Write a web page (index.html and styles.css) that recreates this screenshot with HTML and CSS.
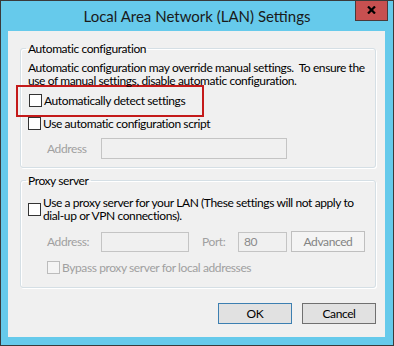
FILE: index.html
```html
<!DOCTYPE html>
<html>
<head>
<meta name="viewport" content="width=device-width, initial-scale=1">
<link rel="stylesheet" href="styles.css">
</head>
<body>
<div class="window">
  <div class="titlebar">
    <span class="title">Local Area Network (LAN) Settings</span>
    <button class="close" aria-label="Close">
      <svg width="9" height="8" viewBox="0 0 9 8"><path d="M1 0.5 L8 7.5 M8 0.5 L1 7.5" stroke="#000" stroke-width="2.2" fill="none"/></svg>
    </button>
  </div>
  <div class="client">
    <fieldset class="group group-auto">
      <legend>Automatic configuration</legend>
      <p class="note">Automatic configuration may override manual settings.&nbsp; To ensure the<br>use of manual settings, disable automatic configuration.</p>
      <div class="highlight">
        <label class="check"><span class="box"></span>Automatically detect settings</label>
      </div>
      <label class="check"><span class="box"></span>Use automatic configuration script</label>
      <div class="field-row row-script">
        <span class="dim label-addr">Address</span>
        <span class="input input-script"></span>
      </div>
    </fieldset>

    <fieldset class="group group-proxy">
      <legend>Proxy server</legend>
      <label class="check check-proxy"><span class="box"></span><span>Use a proxy server for your LAN (These settings will not apply to<br>dial-up or VPN connections).</span></label>
      <div class="field-row row-proxy">
        <span class="dim label-addr">Address:</span>
        <span class="input input-addr"></span>
        <span class="dim label-port">Port:</span>
        <span class="input input-port">80</span>
        <button class="button button-adv" disabled>Advanced</button>
      </div>
      <label class="check check-bypass dim"><span class="box box-off"></span>Bypass proxy server for local addresses</label>
    </fieldset>

    <div class="actions">
      <button class="button button-ok">OK</button>
      <button class="button button-cancel">Cancel</button>
    </div>
  </div>
</div>
</body>
</html>
```

FILE: styles.css
```css
body {
  margin: 0;
  font-family: Lato, "Liberation Sans", sans-serif;
  font-size: 12px;
  letter-spacing: -0.4px;
  color: #000;
  white-space: nowrap;
}
.window {
  width: 394px;
  height: 346px;
  box-sizing: border-box;
  border: 1px solid #3a3a3a;
  background-color: #66caeb;
  display: flex;
  flex-direction: column;
  overflow: hidden;
}
.titlebar {
  position: relative;
  height: 30px;
  flex: none;
  display: flex;
  align-items: center;
  justify-content: center;
}
.title {
  font-size: 15px;
  letter-spacing: 0;
  color: #1a1a1a;
  padding-bottom: 1px;
}
.close {
  position: absolute;
  top: -1px;
  right: 5px;
  width: 33px;
  height: 21px;
  box-sizing: border-box;
  border: 1px solid #4a3a3a;
  border-top: none;
  background-color: #c75050;
  padding: 0;
  display: flex;
  align-items: center;
  justify-content: center;
}
.client {
  margin: 0 8px 0 7px;
  height: 306px;
  flex: none;
  box-sizing: border-box;
  background-color: #f0f0f0;
  padding: 10px 9px 0 12px;
  display: flex;
  flex-direction: column;
}
.group {
  margin: 0;
  min-width: 0;
  border: 1px solid #d5dfe5;
  border-radius: 3px;
  box-shadow: 1px 1px 0 #fff, inset 1px 1px 0 #fff;
  padding: 0 0 8px 7px;
}
.group legend {
  padding: 0 2px;
  margin-left: -2px;
  line-height: 15px;
}
.group-proxy {
  margin-top: 5px;
  padding-bottom: 13px;
}
.note {
  margin: 5px 0 0;
  line-height: 13px;
}
.check {
  display: flex;
  align-items: center;
  gap: 2px;
  line-height: 13px;
}
.box {
  width: 13px;
  height: 13px;
  box-sizing: border-box;
  border: 1px solid #333;
  background-color: #fff;
  flex: none;
}
.box-off {
  border-color: #bcbcbc;
  background-color: #f4f4f4;
}
.highlight {
  width: 188px;
  box-sizing: border-box;
  border: 2px solid #c41a1a;
  margin: -2px 0 0 -12px;
  padding: 7px 0 8px 11px;
}
.dim {
  color: #a0a0a0;
}
.field-row {
  display: flex;
  align-items: center;
  padding-left: 19px;
}
.row-script {
  margin-top: 8px;
}
.label-addr {
  width: 54px;
}
.input {
  box-sizing: border-box;
  border: 1px solid #c4c4c4;
  background-color: #f0f0f0;
  height: 20px;
}
.input-script {
  width: 186px;
  height: 21px;
}
.check-proxy {
  margin-top: 8px;
}
.row-proxy {
  margin-top: 9px;
}
.input-addr {
  width: 88px;
}
.label-port {
  margin-left: 13px;
  width: 36px;
}
.input-port {
  width: 49px;
  color: #8a8a8a;
  padding-left: 5px;
  line-height: 18px;
}
.button {
  font-family: inherit;
  font-size: 12px;
  letter-spacing: inherit;
  box-sizing: border-box;
  width: 74px;
  height: 21px;
  padding: 0;
  background-color: #e1e1e1;
  border: 1px solid #adadad;
  color: #000;
}
.button-adv {
  margin-left: 4px;
  background-color: #f4f4f4;
  border-color: #bfbfbf;
  color: #838383;
}
.check-bypass {
  margin-top: 9px;
  padding-left: 19px;
}
.actions {
  display: flex;
  justify-content: flex-end;
  gap: 10px;
  margin-top: 15px;
}
.button-ok {
  border-color: #3c7fb1;
}
.button-cancel {
  border-color: #707070;
}
```
